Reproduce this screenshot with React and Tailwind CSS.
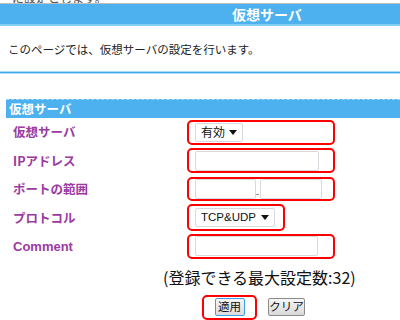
export default function App() {
  const font = { fontFamily: '"Noto Sans CJK JP", "Liberation Sans", sans-serif' };
  const Label = ({ children }) => (
    <div className="w-[187px] pl-[13px] text-[12.5px] font-bold text-[#9b3aa0] leading-none">{children}</div>
  );
  const Caret = () => (
    <svg width="8" height="5" viewBox="0 0 8 5" className="ml-auto"><path d="M0 0h8L4 5z" fill="#111" /></svg>
  );
  const Input = ({ w }) => (
    <div className={`h-[20px] ${w} border border-[#d6dadf] rounded-[2px] bg-white`} />
  );
  return (
    <div className="w-[400px] h-[320px] overflow-hidden bg-white relative" style={font}>
      <div className="h-[3px] overflow-hidden relative">
        <div className="absolute left-[12px] bottom-[-1px] text-[12px] leading-[12px] text-[#555]">に設定とします。</div>
      </div>
      <div className="h-[1px] bg-[#bfbfbf]" />
      <div className="h-[20px] bg-[#4cb1ee] flex items-center">
        <span className="ml-[232px] text-white font-bold text-[14px] leading-none">仮想サーバ</span>
      </div>
      <div className="h-[2px] bg-[#86cdf6]" />
      <div className="h-[45px] flex items-center pl-[8px] text-[11.5px] text-[#222] pt-[2px]">
        このページでは、仮想サーバの設定を行います。
      </div>
      <div className="h-[1px] bg-[#a8dcfa]" />
      <div className="h-[1px] bg-[#3fa8ea]" />
      <div className="h-[1px] bg-[#a8dcfa]" />
      <div className="h-[25px]" />
      <div className="ml-[6px] h-[19px] bg-[#4cb1ee] border-t border-dashed border-[#9ed6f7] flex items-center">
        <span className="pl-[3px] text-white font-bold text-[12.5px] leading-none">仮想サーバ</span>
      </div>
      <div className="flex flex-col">
        <div className="h-[28.5px] flex items-center">
          <Label>仮想サーバ</Label>
          <div className="w-[148px] h-[25px] border-2 border-[#f00] rounded-[5px] flex items-center pl-[6px]">
            <div className="w-[48px] h-[19px] border border-[#d6dadf] rounded-[2px] bg-white flex items-center px-[5px] text-[12px] text-[#111]">
              <span className="leading-none">有効</span>
              <Caret />
            </div>
          </div>
        </div>
        <div className="h-[28.5px] flex items-center">
          <Label>IPアドレス</Label>
          <div className="w-[148px] h-[25px] border-2 border-[#f00] rounded-[5px] flex items-center pl-[6px]">
            <Input w="w-[124px]" />
          </div>
        </div>
        <div className="h-[28.5px] flex items-center">
          <Label>ポートの範囲</Label>
          <div className="w-[148px] h-[24px] border-2 border-[#f00] rounded-[5px] flex items-center pl-[6px]">
            <Input w="w-[61px]" />
            <span className="w-[4px] text-[9px] leading-none text-[#333] mt-[8px]">-</span>
            <Input w="w-[62px]" />
          </div>
        </div>
        <div className="h-[28.5px] flex items-center">
          <Label>プロトコル</Label>
          <div className="w-[98px] h-[27px] border-2 border-[#f00] rounded-[5px] flex items-center pl-[6px]">
            <div className="w-[80px] h-[19px] border border-[#d6dadf] rounded-[2px] bg-white flex items-center px-[5px] text-[11.5px] text-[#111]" style={{ fontFamily: '"Liberation Sans", sans-serif' }}>
              <span className="leading-none">TCP&amp;UDP</span>
              <Caret />
            </div>
          </div>
        </div>
        <div className="h-[28.5px] flex items-center">
          <Label><span style={{ fontFamily: '"Liberation Sans", sans-serif' }} className="text-[13px]">Comment</span></Label>
          <div className="w-[148px] h-[25px] border-2 border-[#f00] rounded-[5px] flex items-center pl-[6px]">
            <Input w="w-[123px]" />
          </div>
        </div>
      </div>
      <div className="mt-[6px] pl-[163px] text-[16px] leading-[20px] text-[#111]">
        (登録できる最大設定数:32)
      </div>
      <div className="mt-[8px] flex items-center pl-[202px]">
        <div className="w-[55px] h-[25px] border-2 border-[#f00] rounded-[5px] flex items-center justify-center">
          <div className="w-[30px] h-[18px] border border-[#3d9ee6] rounded-[2px] bg-gradient-to-b from-[#f6f6f6] to-[#dcdcdc] flex items-center justify-center text-[11.5px] text-[#111] leading-none">適用</div>
        </div>
        <div className="ml-[11px] w-[37px] h-[18px] border border-[#8a8a8a] rounded-[2px] bg-gradient-to-b from-[#f6f6f6] to-[#d8d8d8] flex items-center justify-center text-[11.5px] text-[#111] leading-none">クリア</div>
      </div>
    </div>
  );
}
